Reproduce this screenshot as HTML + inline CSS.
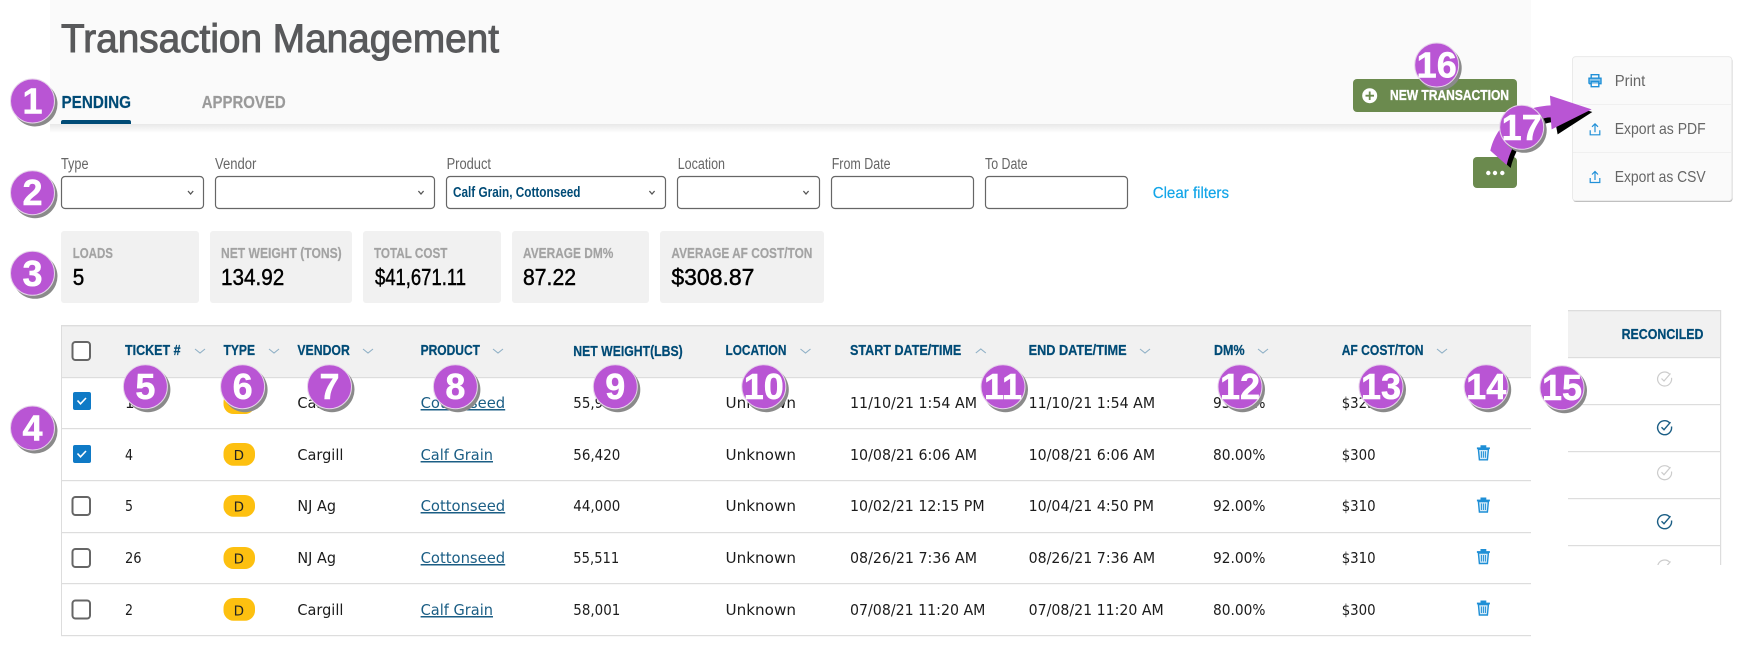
<!DOCTYPE html>
<html>
<head>
<meta charset="utf-8">
<title>Transaction Management</title>
<style>
html,body{margin:0;padding:0;background:#fff;width:1746px;height:649px;overflow:hidden}
svg{display:block}
text{font-family:"Liberation Sans",sans-serif;white-space:pre}
.title{font-size:40px;fill:#58595b;stroke:#58595b;stroke-width:1}
.tab{font-size:17.5px;font-weight:bold;stroke-width:.2}
.lbl{font-size:15.5px;fill:#666}
.sl{font-size:15px;font-weight:bold;fill:#a3a3a3;stroke:#a3a3a3;stroke-width:.2}
.sv{font-size:23px;fill:#000;stroke:#000;stroke-width:.45}
.hd{font-size:15px;font-weight:bold;fill:#004b76;stroke:#004b76;stroke-width:.25}
.b{font-family:"DejaVu Sans",sans-serif;font-size:15px;fill:#1c1c1c}
.a{font-family:"DejaVu Sans",sans-serif;font-size:15px;fill:#1b5e85;text-decoration:underline}
.d{font-family:"DejaVu Sans",sans-serif;font-size:13.5px;fill:#222;text-anchor:middle}
.m{font-size:16px;fill:#666}
.n{font-size:36px;font-weight:bold;fill:#fff;text-anchor:middle;stroke:#fff;stroke-width:.5}
.ln{fill:#ddd}
.inp{fill:#fff;stroke:#666;stroke-width:1.2}
.st{fill:#f1f1f1}
.cb{fill:#fff;stroke:#666;stroke-width:2}
.ch{fill:none;stroke:#8fb0c6;stroke-width:1.1}
.fc{fill:none;stroke:#555;stroke-width:1.3}
.pill{fill:#fdc010}
.sh{fill:#8a8a8a}
.c{fill:#b955d4;stroke:#e6d3ea;stroke-width:1}
</style>
</head>
<body>
<svg width="1746" height="649" viewBox="0 0 1746 649" xmlns="http://www.w3.org/2000/svg">
<defs>
<linearGradient id="g" x1="0" y1="0" x2="0" y2="1"><stop offset="0" stop-color="#e8e8e8"/><stop offset="1" stop-color="#fff"/></linearGradient>
<g id="tr" fill="none" stroke="#1f8fd6" stroke-width="1.4">
<path d="M-5 -3.5 L-4 7 H4 L5 -3.5 Z" fill="#d6ebf8"/>
<path d="M-6.5 -4.5 H6.5" stroke-width="1.8"/>
<path d="M-2.2 -6.8 H2.2 V-5 H-2.2 Z" fill="#1f8fd6"/>
<path d="M-2 -1.5 V5 M0 -1.5 V5 M2 -1.5 V5" stroke-width="1"/>
</g>
<g id="cg" fill="none" stroke="#ccc" stroke-width="1.2">
<path d="M5 -5 A7 7 0 1 0 7 -1.2"/>
<path d="M-3 -0.5 L-0.5 2 L6 -5.5"/>
</g>
<g id="cb" fill="none" stroke="#1b5e85" stroke-width="1.4">
<path d="M5 -5 A7 7 0 1 0 7 -1.2"/>
<path d="M-3 -0.5 L-0.5 2 L6 -5.5"/>
</g>
<g id="up" fill="none" stroke="#2090d8" stroke-width="1.2">
<path d="M-4.8 1 V5.5 H4.8 V1"/>
<path d="M0 3 V-5.5 M-3 -2.5 L0 -5.5 L3 -2.5"/>
</g>
<path id="ck" d="M-4.5 -.5 L-1.5 2.8 L4 -3" fill="none" stroke="#fff" stroke-width="1.6"/>
</defs>

<!-- page header -->
<rect x="50" y="124" width="1481" height="9" fill="url(#g)"/>
<rect x="50" y="0" width="1481" height="124" fill="#fafafa"/>
<text class="title" x="61" y="52" textLength="438" lengthAdjust="spacingAndGlyphs">Transaction Management</text>
<text class="tab" x="61.5" y="108" fill="#004b76" stroke="#004b76" textLength="69.5" lengthAdjust="spacingAndGlyphs">PENDING</text>
<text class="tab" x="201.7" y="108" fill="#9a9a9a" stroke="#9a9a9a" textLength="84" lengthAdjust="spacingAndGlyphs">APPROVED</text>
<path d="M61 124 v-2 a2 2 0 0 1 2 -2 h66 a2 2 0 0 1 2 2 v2z" fill="#004b76"/>

<rect x="1353" y="79" width="164" height="33" rx="4" fill="#6b8a4e"/>
<circle cx="1369.7" cy="95.7" r="7.5" fill="#fff"/>
<path d="M1365.5 95.7 H1374 M1369.7 91.5 V100" stroke="#6b8a4e" stroke-width="1.8"/>
<text x="1390" y="100" font-size="15" font-weight="bold" fill="#fff" stroke="#fff" stroke-width=".35" textLength="119" lengthAdjust="spacingAndGlyphs">NEW TRANSACTION</text>

<rect x="1473" y="157" width="44" height="31" rx="4" fill="#6b8a4e"/>
<circle cx="1488.3" cy="173" r="2.2" fill="#fff"/><circle cx="1495" cy="173" r="2.2" fill="#fff"/><circle cx="1502.3" cy="173" r="2.2" fill="#fff"/>

<!-- export menu -->
<rect x="1573" y="58" width="159.5" height="144" rx="3" fill="#bbb"/>
<rect x="1572.5" y="56.7" width="159.3" height="144" rx="3" fill="#fafafa" stroke="#e6e6e6" stroke-width=".8"/>
<rect x="1573" y="104" width="158" height="1" fill="#f0f0f0"/>
<rect x="1573" y="152" width="158" height="1" fill="#f0f0f0"/>
<g transform="translate(1595,80.7)" fill="none" stroke="#2090d8" stroke-width="1.4">
<path d="M-3.8 -2.5 V-6 H3.8 V-2.5"/>
<path d="M-6 3 V-2.5 H6 V3 H3.8 M-3.8 3 H-6" fill="#8cc6ea"/>
<path d="M-3.8 0.8 H3.8 V6 H-3.8 Z"/>
</g>
<use href="#up" x="1595" y="129.3"/>
<use href="#up" x="1595" y="177"/>
<text class="m" x="1614.7" y="86" textLength="30.6" lengthAdjust="spacingAndGlyphs">Print</text>
<text class="m" x="1614.7" y="134" textLength="91" lengthAdjust="spacingAndGlyphs">Export as PDF</text>
<text class="m" x="1614.7" y="182" textLength="91" lengthAdjust="spacingAndGlyphs">Export as CSV</text>

<!-- arrow -->
<g transform="translate(1300,30) scale(.3333)">
<path d="M632 414 L585 372 C602 298 662 244 764 238 L762 208 L877 246 L773 313 L766 276 C712 276 652 330 632 414 Z" fill="#000"/>
<path d="M620 405 L571 362 C588 286 650 232 752 226 L750 197 L875 238 L755 298 L752 262 C700 262 640 320 620 405 Z" fill="#b955d4"/>
</g>

<!-- filters -->
<text class="lbl" x="61" y="169" textLength="27.5" lengthAdjust="spacingAndGlyphs">Type</text>
<text class="lbl" x="215" y="169" textLength="41.4" lengthAdjust="spacingAndGlyphs">Vendor</text>
<text class="lbl" x="446.6" y="169" textLength="44.4" lengthAdjust="spacingAndGlyphs">Product</text>
<text class="lbl" x="677.7" y="169" textLength="47.3" lengthAdjust="spacingAndGlyphs">Location</text>
<text class="lbl" x="831.7" y="169" textLength="58.9" lengthAdjust="spacingAndGlyphs">From Date</text>
<text class="lbl" x="985" y="169" textLength="42.7" lengthAdjust="spacingAndGlyphs">To Date</text>
<rect class="inp" x="61.5" y="176.5" width="142" height="32" rx="3.5"/>
<rect class="inp" x="215.5" y="176.5" width="219" height="32" rx="3.5"/>
<rect class="inp" x="446.5" y="176.5" width="219" height="32" rx="3.5"/>
<rect class="inp" x="677.5" y="176.5" width="142" height="32" rx="3.5"/>
<rect class="inp" x="831.5" y="176.5" width="142" height="32" rx="3.5"/>
<rect class="inp" x="985.5" y="176.5" width="142" height="32" rx="3.5"/>
<path class="fc" d="M188 191 L190.6 194 L193.2 191"/>
<path class="fc" d="M418.4 191 L421 194 L423.6 191"/>
<path class="fc" d="M649.4 191 L652 194 L654.6 191"/>
<path class="fc" d="M803.4 191 L806 194 L808.6 191"/>
<text x="453" y="197" font-size="14.5" font-weight="bold" fill="#004b76" textLength="127.5" lengthAdjust="spacingAndGlyphs">Calf Grain, Cottonseed</text>
<text x="1152.7" y="198" font-size="16" fill="#12a5e8" stroke="#12a5e8" stroke-width=".2" textLength="76.3" lengthAdjust="spacingAndGlyphs">Clear filters</text>

<!-- stat cards -->
<rect class="st" x="61" y="231" width="138" height="72" rx="3"/>
<rect class="st" x="210" y="231" width="142" height="72" rx="3"/>
<rect class="st" x="363" y="231" width="138" height="72" rx="3"/>
<rect class="st" x="512" y="231" width="137" height="72" rx="3"/>
<rect class="st" x="660" y="231" width="164" height="72" rx="3"/>
<text class="sl" x="72.7" y="258" textLength="40.3" lengthAdjust="spacingAndGlyphs">LOADS</text>
<text class="sl" x="221" y="258" textLength="120.7" lengthAdjust="spacingAndGlyphs">NET WEIGHT (TONS)</text>
<text class="sl" x="374" y="258" textLength="73.4" lengthAdjust="spacingAndGlyphs">TOTAL COST</text>
<text class="sl" x="523" y="258" textLength="90.4" lengthAdjust="spacingAndGlyphs">AVERAGE DM%</text>
<text class="sl" x="671.4" y="258" textLength="141" lengthAdjust="spacingAndGlyphs">AVERAGE AF COST/TON</text>
<text class="sv" x="72.7" y="285" textLength="11.5" lengthAdjust="spacingAndGlyphs">5</text>
<text class="sv" x="221" y="285" textLength="63.3" lengthAdjust="spacingAndGlyphs">134.92</text>
<text class="sv" x="375" y="285" textLength="91" lengthAdjust="spacingAndGlyphs">$41,671.11</text>
<text class="sv" x="523" y="285" textLength="53" lengthAdjust="spacingAndGlyphs">87.22</text>
<text class="sv" x="671.4" y="285" textLength="83" lengthAdjust="spacingAndGlyphs">$308.87</text>

<!-- table -->
<rect x="61" y="326" width="1470" height="51" fill="#f1f1f1"/>
<rect class="ln" x="61" y="325" width="1470" height="1.4"/>
<rect class="ln" x="61" y="325" width="1" height="310"/>
<rect class="ln" x="61" y="377" width="1470" height="1.2"/>
<rect class="ln" x="61" y="428" width="1470" height="1.2"/>
<rect class="ln" x="61" y="480" width="1470" height="1.2"/>
<rect class="ln" x="61" y="532" width="1470" height="1.2"/>
<rect class="ln" x="61" y="583" width="1470" height="1.2"/>
<rect class="ln" x="61" y="635" width="1470" height="1.2"/>

<rect class="cb" x="72.5" y="342" width="17.5" height="18" rx="3"/>
<rect x="73" y="392" width="18" height="18" rx="2" fill="#0f7ac6"/><use href="#ck" x="82" y="401"/>
<rect x="73" y="445" width="18" height="18" rx="2" fill="#0f7ac6"/><use href="#ck" x="82" y="454"/>
<rect class="cb" x="72.5" y="497" width="17.5" height="18" rx="3"/>
<rect class="cb" x="72.5" y="549" width="17.5" height="18" rx="3"/>
<rect class="cb" x="72.5" y="600.5" width="17.5" height="18" rx="3"/>

<text class="hd" x="125" y="355" textLength="55.6" lengthAdjust="spacingAndGlyphs">TICKET #</text>
<text class="hd" x="223.5" y="355" textLength="31.5" lengthAdjust="spacingAndGlyphs">TYPE</text>
<text class="hd" x="297.4" y="355" textLength="52.4" lengthAdjust="spacingAndGlyphs">VENDOR</text>
<text class="hd" x="420.6" y="355" textLength="59.4" lengthAdjust="spacingAndGlyphs">PRODUCT</text>
<text class="hd" x="573.3" y="356" textLength="109.4" lengthAdjust="spacingAndGlyphs">NET WEIGHT(LBS)</text>
<text class="hd" x="725.5" y="355" textLength="60.9" lengthAdjust="spacingAndGlyphs">LOCATION</text>
<text class="hd" x="850" y="355" textLength="111.3" lengthAdjust="spacingAndGlyphs">START DATE/TIME</text>
<text class="hd" x="1028.6" y="355" textLength="98" lengthAdjust="spacingAndGlyphs">END DATE/TIME</text>
<text class="hd" x="1214" y="355" textLength="30.6" lengthAdjust="spacingAndGlyphs">DM%</text>
<text class="hd" x="1341.7" y="355" textLength="81.8" lengthAdjust="spacingAndGlyphs">AF COST/TON</text>
<path class="ch" d="M195 349 L200 353 L205 349"/>
<path class="ch" d="M269 349 L274 353 L279 349"/>
<path class="ch" d="M363 349 L368 353 L373 349"/>
<path class="ch" d="M493 349 L498 353 L503 349"/>
<path class="ch" d="M800.5 349 L805.5 353 L810.5 349"/>
<path class="ch" d="M975.8 353 L980.8 349 L985.8 353"/>
<path class="ch" d="M1140 349 L1145 353 L1150 349"/>
<path class="ch" d="M1258 349 L1263 353 L1268 349"/>
<path class="ch" d="M1437 349 L1442 353 L1447 349"/>

<!-- row 1 -->
<text class="b" x="125" y="408">1</text>
<rect class="pill" x="223.5" y="392" width="31.5" height="22" rx="10"/>
<text class="b" x="297.4" y="408" textLength="46" lengthAdjust="spacingAndGlyphs">Cargill</text>
<text class="a" x="420.6" y="408" textLength="84.6" lengthAdjust="spacingAndGlyphs">Cottonseed</text>
<text class="b" x="573.3" y="408" textLength="47" lengthAdjust="spacingAndGlyphs">55,980</text>
<text class="b" x="725.5" y="408" textLength="70.5" lengthAdjust="spacingAndGlyphs">Unknown</text>
<text class="b" x="850" y="408" textLength="127" lengthAdjust="spacingAndGlyphs">11/10/21 1:54 AM</text>
<text class="b" x="1028.6" y="408" textLength="126.5" lengthAdjust="spacingAndGlyphs">11/10/21 1:54 AM</text>
<text class="b" x="1213" y="408" textLength="52.5" lengthAdjust="spacingAndGlyphs">93.00%</text>
<text class="b" x="1341.7" y="408" textLength="34" lengthAdjust="spacingAndGlyphs">$325</text>

<!-- row 2 -->
<text class="b" x="125" y="460" textLength="8" lengthAdjust="spacingAndGlyphs">4</text>
<rect class="pill" x="223.5" y="443" width="31.5" height="22.7" rx="10"/>
<text class="d" x="238.8" y="460">D</text>
<text class="b" x="297.4" y="460" textLength="46" lengthAdjust="spacingAndGlyphs">Cargill</text>
<text class="a" x="420.6" y="460" textLength="72.4" lengthAdjust="spacingAndGlyphs">Calf Grain</text>
<text class="b" x="573.3" y="460" textLength="47" lengthAdjust="spacingAndGlyphs">56,420</text>
<text class="b" x="725.5" y="460" textLength="70.5" lengthAdjust="spacingAndGlyphs">Unknown</text>
<text class="b" x="850" y="460" textLength="127" lengthAdjust="spacingAndGlyphs">10/08/21 6:06 AM</text>
<text class="b" x="1028.6" y="460" textLength="126.5" lengthAdjust="spacingAndGlyphs">10/08/21 6:06 AM</text>
<text class="b" x="1213" y="460" textLength="52.5" lengthAdjust="spacingAndGlyphs">80.00%</text>
<text class="b" x="1341.7" y="460" textLength="34" lengthAdjust="spacingAndGlyphs">$300</text>
<use href="#tr" x="1483.4" y="452.8"/>

<!-- row 3 -->
<text class="b" x="125" y="511" textLength="8" lengthAdjust="spacingAndGlyphs">5</text>
<rect class="pill" x="223.5" y="495" width="31.5" height="21.7" rx="10"/>
<text class="d" x="238.8" y="511.3">D</text>
<text class="b" x="297.4" y="511" textLength="38.6" lengthAdjust="spacingAndGlyphs">NJ Ag</text>
<text class="a" x="420.6" y="511" textLength="84.6" lengthAdjust="spacingAndGlyphs">Cottonseed</text>
<text class="b" x="573.3" y="511" textLength="47" lengthAdjust="spacingAndGlyphs">44,000</text>
<text class="b" x="725.5" y="511" textLength="70.5" lengthAdjust="spacingAndGlyphs">Unknown</text>
<text class="b" x="850" y="511" textLength="134.6" lengthAdjust="spacingAndGlyphs">10/02/21 12:15 PM</text>
<text class="b" x="1028.6" y="511" textLength="125.4" lengthAdjust="spacingAndGlyphs">10/04/21 4:50 PM</text>
<text class="b" x="1213" y="511" textLength="52.5" lengthAdjust="spacingAndGlyphs">92.00%</text>
<text class="b" x="1341.7" y="511" textLength="34" lengthAdjust="spacingAndGlyphs">$310</text>
<use href="#tr" x="1483.4" y="505"/>

<!-- row 4 -->
<text class="b" x="125" y="563" textLength="16.6" lengthAdjust="spacingAndGlyphs">26</text>
<rect class="pill" x="223.5" y="547" width="31.5" height="22" rx="10"/>
<text class="d" x="238.8" y="563.3">D</text>
<text class="b" x="297.4" y="563" textLength="38.6" lengthAdjust="spacingAndGlyphs">NJ Ag</text>
<text class="a" x="420.6" y="563" textLength="84.6" lengthAdjust="spacingAndGlyphs">Cottonseed</text>
<text class="b" x="573.3" y="563" textLength="46" lengthAdjust="spacingAndGlyphs">55,511</text>
<text class="b" x="725.5" y="563" textLength="70.5" lengthAdjust="spacingAndGlyphs">Unknown</text>
<text class="b" x="850" y="563" textLength="127" lengthAdjust="spacingAndGlyphs">08/26/21 7:36 AM</text>
<text class="b" x="1028.6" y="563" textLength="126.5" lengthAdjust="spacingAndGlyphs">08/26/21 7:36 AM</text>
<text class="b" x="1213" y="563" textLength="52.5" lengthAdjust="spacingAndGlyphs">92.00%</text>
<text class="b" x="1341.7" y="563" textLength="34" lengthAdjust="spacingAndGlyphs">$310</text>
<use href="#tr" x="1483.4" y="556.5"/>

<!-- row 5 -->
<text class="b" x="125" y="615" textLength="8" lengthAdjust="spacingAndGlyphs">2</text>
<rect class="pill" x="223.5" y="598" width="31.5" height="22.7" rx="10"/>
<text class="d" x="238.8" y="615.3">D</text>
<text class="b" x="297.4" y="615" textLength="46" lengthAdjust="spacingAndGlyphs">Cargill</text>
<text class="a" x="420.6" y="615" textLength="72.4" lengthAdjust="spacingAndGlyphs">Calf Grain</text>
<text class="b" x="573.3" y="615" textLength="47" lengthAdjust="spacingAndGlyphs">58,001</text>
<text class="b" x="725.5" y="615" textLength="70.5" lengthAdjust="spacingAndGlyphs">Unknown</text>
<text class="b" x="850" y="615" textLength="135.4" lengthAdjust="spacingAndGlyphs">07/08/21 11:20 AM</text>
<text class="b" x="1028.6" y="615" textLength="135.1" lengthAdjust="spacingAndGlyphs">07/08/21 11:20 AM</text>
<text class="b" x="1213" y="615" textLength="52.5" lengthAdjust="spacingAndGlyphs">80.00%</text>
<text class="b" x="1341.7" y="615" textLength="34" lengthAdjust="spacingAndGlyphs">$300</text>
<use href="#tr" x="1483.4" y="608"/>

<!-- reconciled panel -->
<rect x="1568" y="311" width="152" height="46" fill="#f1f1f1"/>
<rect class="ln" x="1568" y="310" width="152" height="1.3"/>
<rect class="ln" x="1720" y="310" width="1.2" height="255"/>
<rect class="ln" x="1568" y="357" width="152" height="1.2"/>
<rect class="ln" x="1568" y="404" width="152" height="1.2"/>
<rect class="ln" x="1568" y="451" width="152" height="1.2"/>
<rect class="ln" x="1568" y="498" width="152" height="1.2"/>
<rect class="ln" x="1568" y="545" width="152" height="1.2"/>
<text class="hd" x="1621.6" y="339" textLength="81.9" lengthAdjust="spacingAndGlyphs">RECONCILED</text>
<use href="#cg" x="1664.5" y="379"/>
<use href="#cb" x="1664.5" y="427.7"/>
<use href="#cg" x="1664.5" y="472.7"/>
<use href="#cb" x="1664.5" y="521.7"/>
<use href="#cg" x="1664.5" y="567"/>
<rect x="1568" y="565" width="160" height="12" fill="#fff"/>

<!-- callouts -->
<g>
<circle class="sh" cx="35" cy="104" r="22.5"/><circle class="c" cx="32.5" cy="101" r="22"/><text class="n" x="32.5" y="113.5">1</text>
<circle class="sh" cx="35" cy="195.7" r="22.5"/><circle class="c" cx="32.5" cy="192.7" r="22"/><text class="n" x="32.5" y="205.2">2</text>
<circle class="sh" cx="35" cy="276.3" r="22.5"/><circle class="c" cx="32.5" cy="273.3" r="22"/><text class="n" x="32.5" y="285.8">3</text>
<circle class="sh" cx="35" cy="431" r="22.5"/><circle class="c" cx="32.5" cy="428" r="22"/><text class="n" x="32.5" y="440.5">4</text>
<circle class="sh" cx="147.9" cy="389.7" r="22.5"/><circle class="c" cx="145.4" cy="386.7" r="22"/><text class="n" x="145.4" y="399.2">5</text>
<circle class="sh" cx="245.1" cy="389.7" r="22.5"/><circle class="c" cx="242.6" cy="386.7" r="22"/><text class="n" x="242.6" y="399.2">6</text>
<circle class="sh" cx="332" cy="389.7" r="22.5"/><circle class="c" cx="329.5" cy="386.7" r="22"/><text class="n" x="329.5" y="399.2">7</text>
<circle class="sh" cx="457.9" cy="389.7" r="22.5"/><circle class="c" cx="455.4" cy="386.7" r="22"/><text class="n" x="455.4" y="399.2">8</text>
<circle class="sh" cx="617.8" cy="389.7" r="22.5"/><circle class="c" cx="615.3" cy="386.7" r="22"/><text class="n" x="615.3" y="399.2">9</text>
<circle class="sh" cx="766.3" cy="389.7" r="22.5"/><circle class="c" cx="763.8" cy="386.7" r="22"/><text class="n" x="763.8" y="399.2">10</text>
<circle class="sh" cx="1005.5" cy="389.7" r="22.5"/><circle class="c" cx="1003" cy="386.7" r="22"/><text class="n" x="1003" y="399.2">11</text>
<circle class="sh" cx="1242.5" cy="389.7" r="22.5"/><circle class="c" cx="1240" cy="386.7" r="22"/><text class="n" x="1240" y="399.2">12</text>
<circle class="sh" cx="1383.5" cy="389.7" r="22.5"/><circle class="c" cx="1381" cy="386.7" r="22"/><text class="n" x="1381" y="399.2">13</text>
<circle class="sh" cx="1488.7" cy="389.7" r="22.5"/><circle class="c" cx="1486.2" cy="386.7" r="22"/><text class="n" x="1486.2" y="399.2">14</text>
<circle class="sh" cx="1564.5" cy="390.7" r="22.5"/><circle class="c" cx="1562" cy="387.7" r="22"/><text class="n" x="1562" y="400.2">15</text>
<circle class="sh" cx="1439.2" cy="68" r="22.5"/><circle class="c" cx="1436.7" cy="65" r="22"/><text class="n" x="1436.7" y="77.5">16</text>
<circle class="sh" cx="1524.2" cy="130.3" r="22.5"/><circle class="c" cx="1521.7" cy="127.3" r="22"/><text class="n" x="1521.7" y="139.8">17</text>
</g>
</svg>
</body>
</html>
